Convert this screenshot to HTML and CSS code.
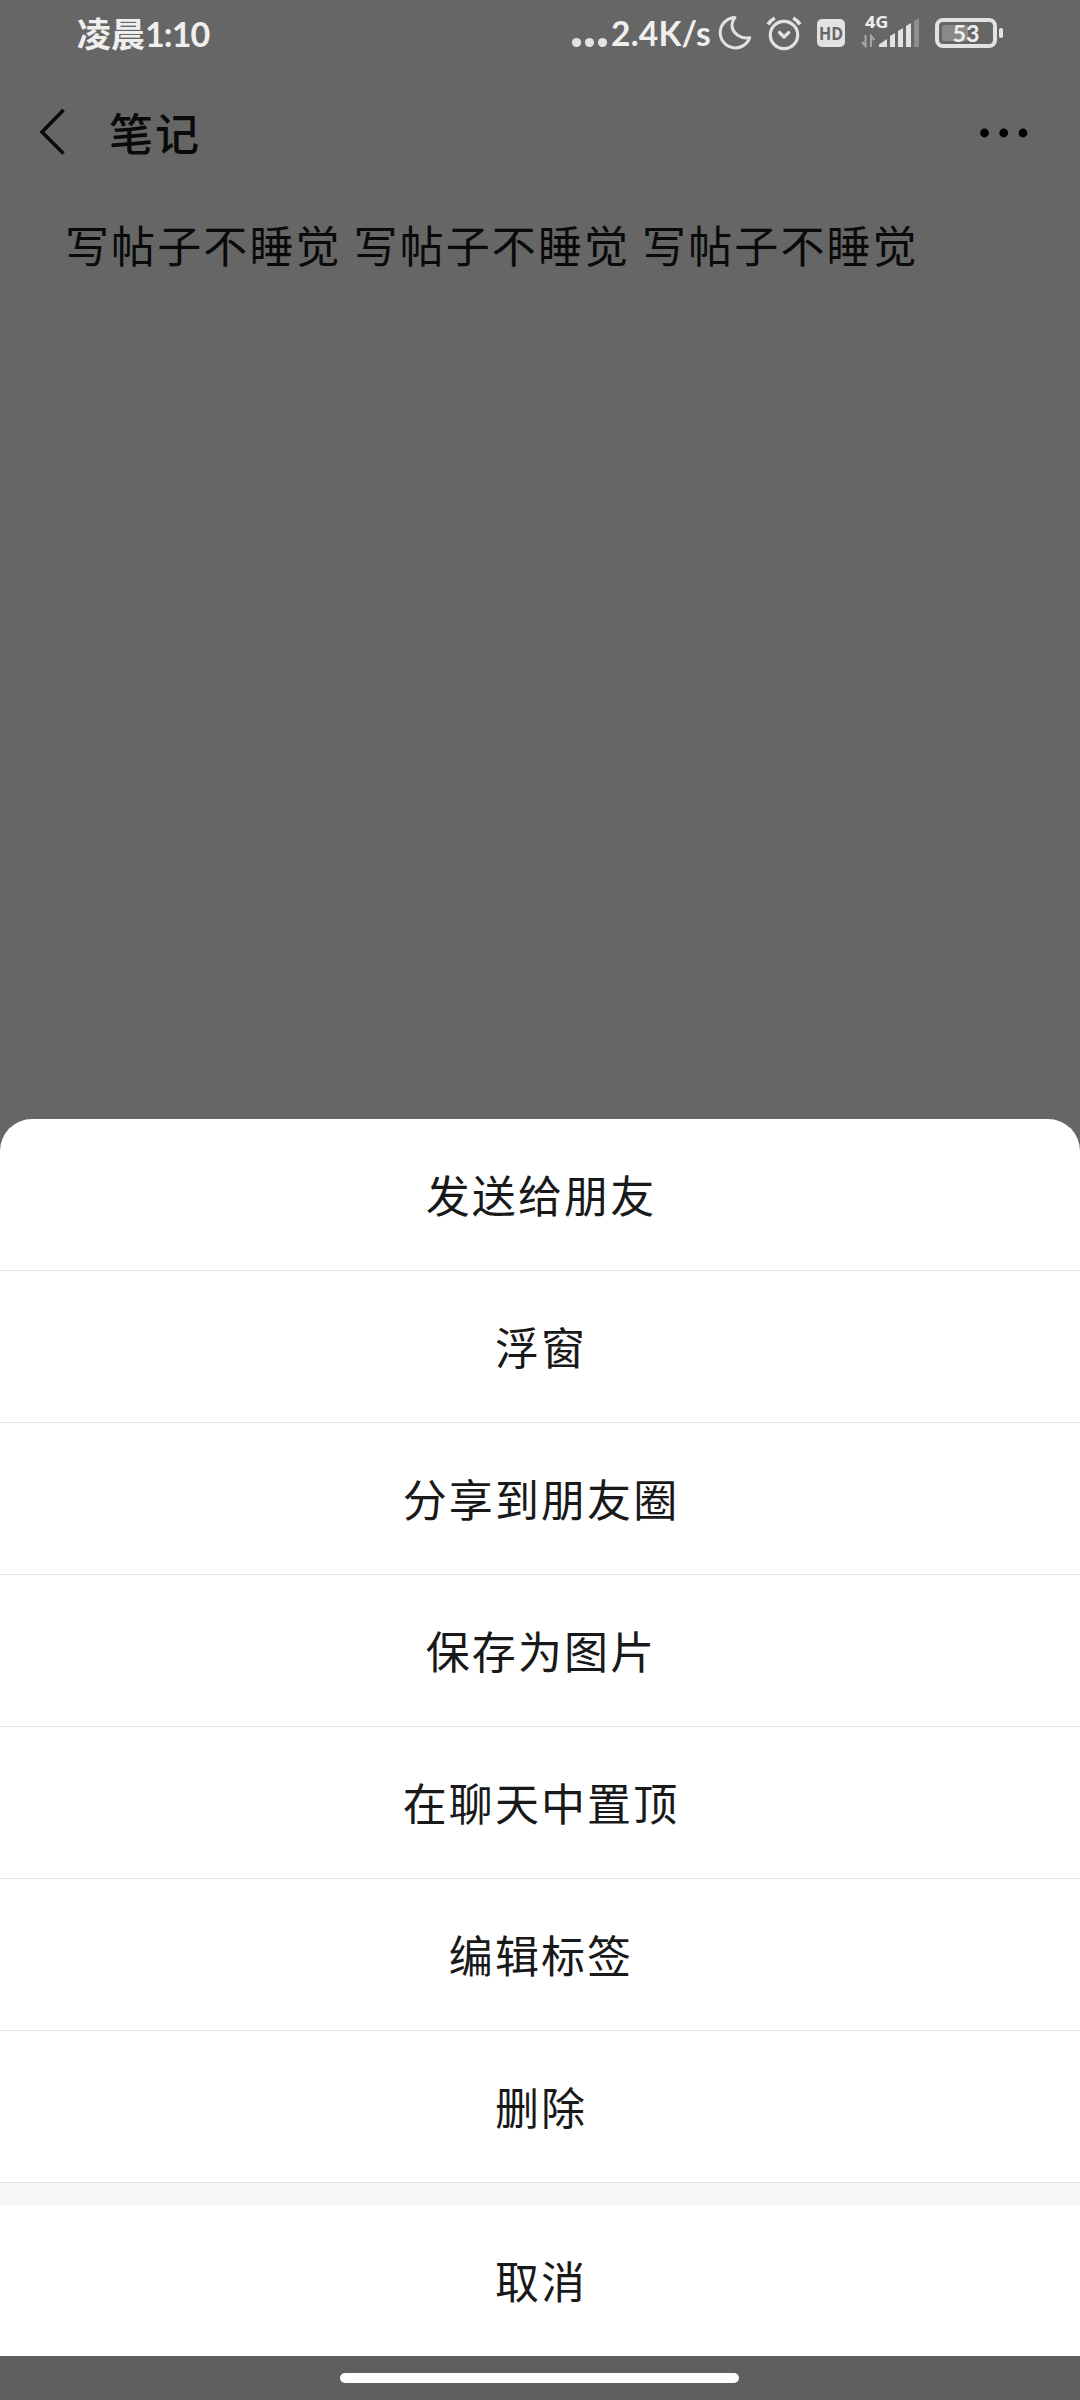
FILE: index.html
```html
<!DOCTYPE html>
<html lang="zh-CN">
<head>
<meta charset="utf-8">
<title>笔记</title>
<link rel="stylesheet" href="styles.css">
</head>
<body>
<div class="screen">
  <header class="status">
    <span class="time">凌晨<span class="digits">1:10</span></span>
    <span class="speed">2.4K/s</span>
    <svg class="status-icons" viewBox="560 0 520 66" width="520" height="66">
      <g fill="#e2e2e2"><circle cx="576.5" cy="42.5" r="4.6"/><circle cx="589.5" cy="42.5" r="4.6"/><circle cx="602.5" cy="42.5" r="4.6"/></g>
      <path d="M735 17.5A15.2 15.2 0 1 0 749.8 37.6C742 39.5 731.500 33.500 732 24.500Q732.300 20.500 735 17.500Z" fill="none" stroke="#e2e2e2" stroke-width="3" stroke-linejoin="round"/>
      <g fill="none" stroke="#e2e2e2" stroke-width="3.200" stroke-linecap="round" stroke-linejoin="round">
        <circle cx="784" cy="35" r="13.700"/><path d="M779.500 32.500L784 37L788.800 32.500"/>
        <path d="M768 24.500Q770.500 20.500 774.800 18M793.200 18Q797.500 20.500 800 24.500" stroke-width="3.400" stroke-linecap="butt"/>
      </g>
      <rect x="817" y="19" width="28" height="28" rx="5" fill="#e2e2e2"/>
      <text class="hd" x="831" y="40" text-anchor="middle" textLength="24" lengthAdjust="spacingAndGlyphs">HD</text>
      <text class="net" x="865" y="28" textLength="23.500" lengthAdjust="spacingAndGlyphs">4G</text>
      <path d="M865.500 35V46L862 42M871 47V36L874.500 40" fill="none" stroke="#a6a6a6" stroke-width="2"/>
      <g fill="#e2e2e2"><path d="M879 47V44.500L887 39V47ZM890 47V36L895 33V47ZM898 47V31L903 28V47ZM906 47V26L911 23V47Z"/></g>
      <path d="M914 47V21L919 18V47Z" fill="#8e8e8e"/>
      <rect x="942" y="25" width="26" height="16" rx="2.500" fill="#898989"/>
      <rect x="937" y="20" width="58" height="26" rx="6" fill="none" stroke="#e2e2e2" stroke-width="4"/>
      <rect x="999" y="28" width="4" height="10" rx="1.800" fill="#e2e2e2"/>
      <text class="battery" x="966" y="41.500" text-anchor="middle" textLength="27" lengthAdjust="spacingAndGlyphs">53</text>
    </svg>
  </header>
  <nav class="bar">
    <svg class="back" viewBox="0 0 28 48" width="28" height="48"><path d="M24.500 2L3 24L24.500 45.500" fill="none" stroke="#0a0a0a" stroke-width="3.600"/></svg>
    <h1 class="title">笔记</h1>
    <svg class="more" viewBox="0 0 48 10" width="48" height="10"><circle cx="4.500" cy="5" r="4.400"/><circle cx="23.700" cy="5" r="4.400"/><circle cx="43" cy="5" r="4.400"/></svg>
  </nav>
  <main class="note">写帖子不睡觉 写帖子不睡觉 写帖子不睡觉</main>
  <section class="sheet">
    <div class="item">发送给朋友</div>
    <div class="item">浮窗</div>
    <div class="item">分享到朋友圈</div>
    <div class="item">保存为图片</div>
    <div class="item">在聊天中置顶</div>
    <div class="item">编辑标签</div>
    <div class="item">删除</div>
    <div class="gap"></div>
    <div class="item cancel">取消</div>
  </section>
  <footer class="home"><span class="handle"></span></footer>
</div>
</body>
</html>
```
FILE: styles.css
```css
* { box-sizing: border-box; }
body {
  margin: 0;
  background: #666;
  font-family: "Noto Sans CJK SC", sans-serif;
}
.screen {
  width: 1080px;
  height: 2400px;
  display: flex;
  flex-direction: column;
  overflow: hidden;
}
.status {
  height: 66px;
  flex: none;
  display: grid;
  grid-template-columns: 560px 520px;
  color: #efefef;
  font-weight: 700;
  line-height: 66px;
  white-space: nowrap;
}
.time { grid-area: 1 / 1; padding-left: 77px; font-size: 34px; line-height: 65px; }
.digits { font-family: Lato, sans-serif; font-size: 34px; letter-spacing: -0.9px; }
.speed { grid-area: 1 / 2; padding-left: 51px; font-family: Lato, sans-serif; font-size: 33.500px; letter-spacing: 0.2px; }
.status-icons { grid-area: 1 / 2; display: block; }
.hd { font: 700 17px "Open Sans", sans-serif; fill: #666; }
.net { font: 700 16px "Open Sans", sans-serif; fill: #efefef; }
.battery { font: 700 23px Lato, sans-serif; fill: #efefef; }
.bar {
  height: 131px;
  flex: none;
  display: flex;
  align-items: center;
  padding: 0 52px 0 39px;
}
.more { margin-top: 3px; }
.title {
  margin: 0 auto 0 42px;
  font-size: 44px;
  font-weight: 500;
  line-height: 64px;
  letter-spacing: 2px;
  color: #0a0a0a;
}
.note {
  flex: 1;
  padding: 15px 65px;
  font-size: 44px;
  line-height: 64px;
  letter-spacing: 2.100px;
  white-space: nowrap;
  color: #0a0a0a;
}
.sheet {
  flex: none;
  overflow: hidden;
  border-radius: 32px 32px 0 0;
  background: #fff;
}
.item {
  height: 152px;
  padding-left: 2px;
  border-bottom: 1px solid #e2e2e2;
  line-height: 150px;
  text-align: center;
  font-size: 44px;
  letter-spacing: 2.100px;
  color: #191919;
}
.gap { height: 22px; background: #f6f6f6; }
.cancel { height: 151px; border: 0; }
.home {
  height: 44px;
  flex: none;
  display: flex;
  padding: 17px 0 0 340px;
  background: #5f5f5f;
}
.handle { width: 399px; height: 10px; border-radius: 5px; background: #fff; }
```
